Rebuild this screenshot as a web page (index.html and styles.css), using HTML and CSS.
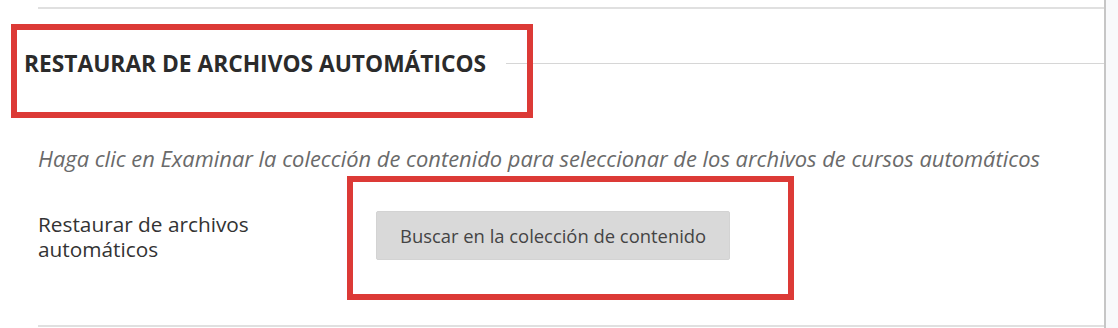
FILE: index.html
```html
<!DOCTYPE html>
<html lang="es">
<head>
<meta charset="utf-8">
<title>Restaurar de archivos automáticos</title>
<link rel="stylesheet" href="styles.css">
</head>
<body>
<div class="page">
  <div class="panel">
    <div class="topline"></div>
    <div class="legend-row">
      <h2 class="legend">RESTAURAR DE ARCHIVOS AUTOMÁTICOS</h2>
      <div class="legend-line"></div>
    </div>
    <p class="instructions">Haga clic en Examinar la colección de contenido para seleccionar de los archivos de cursos automáticos</p>
    <div class="field-row">
      <div class="field-label">Restaurar de archivos automáticos</div>
      <div class="field-control">
        <button class="btn" type="button">Buscar en la colección de contenido</button>
      </div>
    </div>
    <div class="bottomline"></div>
    <div class="mark mark-heading"></div>
    <div class="mark mark-button"></div>
  </div>
  <div class="side"></div>
</div>
</body>
</html>
```

FILE: styles.css
```css
html, body {
  margin: 0;
  padding: 0;
}
body {
  background: #f8f9fb;
  font-family: "Open Sans", "Noto Sans", sans-serif;
  color: #333;
}
.page {
  display: flex;
  width: 1118px;
  height: 328px;
  overflow: hidden;
}
.panel {
  position: relative;
  width: 1106px;
  height: 328px;
  background: #fff;
  border-right: 2px solid #c6c6c6;
  padding-top: 7px;
  box-sizing: border-box;
  flex: none;
}
.side {
  flex: 1;
  background: #f8f9fb;
}
.topline {
  margin-left: 38px;
  border-top: 2px solid #e0e0e0;
}
.legend-row {
  display: flex;
  align-items: center;
  margin: 41px 0 0 24px;
  height: 28px;
}
.legend {
  margin: 0;
  font-size: 22.75px;
  line-height: 28px;
  font-weight: 700;
  color: #2b2b2b;
  white-space: nowrap;
}
.legend-line {
  flex: 1;
  margin-left: 20px;
  border-top: 1px solid #d6d6d6;
  position: relative;
  top: -1px;
}
.instructions {
  margin: 68px 0 0 38px;
  font-size: 21.9px;
  line-height: 25px;
  font-style: italic;
  color: #6a6a6a;
  white-space: nowrap;
}
.field-row {
  display: flex;
  margin: 40px 0 0 38px;
}
.field-label {
  width: 240px;
  margin-right: 98px;
  font-size: 20.8px;
  line-height: 25px;
  color: #333;
  padding-top: 1px;
}
.btn {
  font-family: "Open Sans", "Noto Sans", sans-serif;
  font-size: 18.4px;
  color: #444;
  background: #d9d9d9;
  border: 1px solid #d3d3d3;
  border-radius: 2px;
  height: 49px;
  padding: 0 23px;
  cursor: pointer;
}
.bottomline {
  margin: 63px 0 0 38px;
  border-top: 2px solid #e0e0e0;
}
.mark {
  position: absolute;
  border: 6px solid #dc3a36;
  box-sizing: border-box;
}
.mark-heading {
  left: 11px;
  top: 24px;
  width: 522px;
  height: 94px;
}
.mark-button {
  left: 347px;
  top: 176px;
  width: 447px;
  height: 124px;
}
```
